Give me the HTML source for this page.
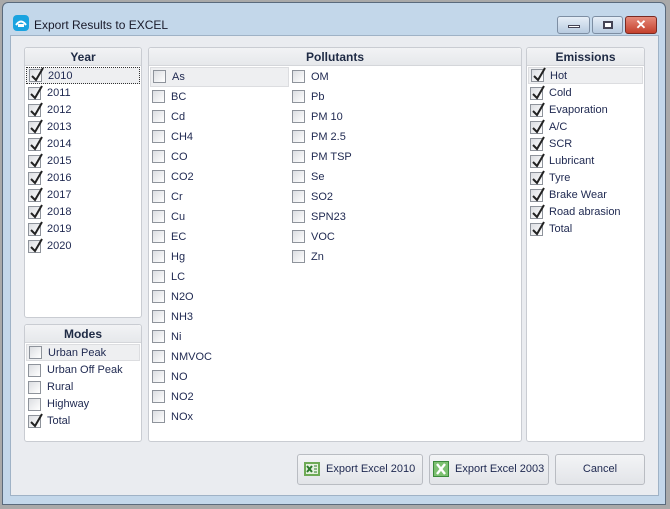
<!DOCTYPE html>
<html><head><style>
*{margin:0;padding:0;box-sizing:border-box}
body{width:670px;height:509px;background:#a9a9a9;font-family:"Liberation Sans",sans-serif;font-size:11px;color:#1e2850;position:relative;overflow:hidden}
.win{position:absolute;left:2px;top:2px;width:664px;height:503px;background:#c3d7ea;border:1px solid #5a6a7c;border-radius:6px 6px 0 0}
.title{position:absolute;left:31px;top:15px;font-size:12px;color:#1a1a2a}
.client{position:absolute;left:10px;top:35px;width:649px;height:461px;background:#eaecf0;border:1px solid #9fb2c6}
.p{position:absolute;background:#fff;border:1px solid #c9ccd2;border-radius:3px}
.h{height:18px;background:linear-gradient(#f2f3f5,#e6e8eb);border-bottom:1px solid #d4d6da;text-align:center;font-weight:bold;font-size:12px;line-height:18px;color:#1e2a44;border-radius:3px 3px 0 0}
.r{position:absolute;height:17px;line-height:17px;white-space:nowrap}
.r.sel{background:#eeeff1;border:1px solid #dcdde0;line-height:17px}
.r.sel .t{top:0}
.cb{position:absolute;left:3px;top:2px;width:13px;height:13px;border:1px solid #8e939b;background:linear-gradient(135deg,#dcdee2,#fff)}
.r.sel .cb{top:1px;left:2px}
.cb svg{position:absolute;left:0;top:-4px}
.t{position:absolute;left:22px}
.r.sel .t{left:21px}
.pr{height:20px;line-height:20px}
.r.pr.sel{line-height:18px}
.pr .cb{top:3px}
.btn{position:absolute;top:454px;height:31px;border:1px solid #b9bcc2;border-radius:3px;background:linear-gradient(#f3f4f6,#e2e4e8);font-size:11px;line-height:29px;color:#1e2850;white-space:nowrap}
.wb{position:absolute;top:13px;height:18px;border:1px solid #7d8ea3;border-radius:3px;background:linear-gradient(#e6eef7,#b8cbe0)}
</style></head><body>
<div class="win">
<svg style="position:absolute;left:10px;top:12px" width="16" height="16"><rect width="16" height="16" rx="4" fill="#1aa3e0"/><path d="M3 10 Q8 3 13 10" stroke="#fff" stroke-width="2" fill="none"/><rect x="5" y="9" width="6" height="3" fill="#fff"/></svg>
<div class="title">Export Results to EXCEL</div>
<div class="wb" style="left:554px;width:33px"><div style="position:absolute;left:10px;top:8px;width:12px;height:3px;background:#fff;border:1px solid #445"></div></div>
<div class="wb" style="left:589px;width:31px"><div style="position:absolute;left:10px;top:4px;width:10px;height:8px;border:2px solid #445;background:#fff"></div></div>
<div class="wb" style="left:622px;width:32px;background:linear-gradient(#e58a7a,#c4402c);border-color:#7a2a22;color:#fff;font-weight:bold;text-align:center;line-height:16px;font-size:13px">✕</div>
</div>
<div class="client"></div>

<div class="p" style="left:24px;top:47px;width:118px;height:271px"><div class="h">Year</div>
<div class="r sel" style="left:1px;top:19px;width:114px;border:1px dotted #333;background:#eeeff1"><span class="cb"><svg width="16" height="16"><path d="M2 10 L6 14 L13 2" stroke="#222" stroke-width="2" fill="none"/></svg></span><span class="t">2010</span></div>
<div class="r" style="left:0;top:37px"><span class="cb"><svg width="16" height="16"><path d="M2 10 L6 14 L13 2" stroke="#222" stroke-width="2" fill="none"/></svg></span><span class="t">2011</span></div>
<div class="r" style="left:0;top:54px"><span class="cb"><svg width="16" height="16"><path d="M2 10 L6 14 L13 2" stroke="#222" stroke-width="2" fill="none"/></svg></span><span class="t">2012</span></div>
<div class="r" style="left:0;top:71px"><span class="cb"><svg width="16" height="16"><path d="M2 10 L6 14 L13 2" stroke="#222" stroke-width="2" fill="none"/></svg></span><span class="t">2013</span></div>
<div class="r" style="left:0;top:88px"><span class="cb"><svg width="16" height="16"><path d="M2 10 L6 14 L13 2" stroke="#222" stroke-width="2" fill="none"/></svg></span><span class="t">2014</span></div>
<div class="r" style="left:0;top:105px"><span class="cb"><svg width="16" height="16"><path d="M2 10 L6 14 L13 2" stroke="#222" stroke-width="2" fill="none"/></svg></span><span class="t">2015</span></div>
<div class="r" style="left:0;top:122px"><span class="cb"><svg width="16" height="16"><path d="M2 10 L6 14 L13 2" stroke="#222" stroke-width="2" fill="none"/></svg></span><span class="t">2016</span></div>
<div class="r" style="left:0;top:139px"><span class="cb"><svg width="16" height="16"><path d="M2 10 L6 14 L13 2" stroke="#222" stroke-width="2" fill="none"/></svg></span><span class="t">2017</span></div>
<div class="r" style="left:0;top:156px"><span class="cb"><svg width="16" height="16"><path d="M2 10 L6 14 L13 2" stroke="#222" stroke-width="2" fill="none"/></svg></span><span class="t">2018</span></div>
<div class="r" style="left:0;top:173px"><span class="cb"><svg width="16" height="16"><path d="M2 10 L6 14 L13 2" stroke="#222" stroke-width="2" fill="none"/></svg></span><span class="t">2019</span></div>
<div class="r" style="left:0;top:190px"><span class="cb"><svg width="16" height="16"><path d="M2 10 L6 14 L13 2" stroke="#222" stroke-width="2" fill="none"/></svg></span><span class="t">2020</span></div>
</div>

<div class="p" style="left:24px;top:324px;width:118px;height:118px"><div class="h">Modes</div>
<div class="r sel" style="left:1px;top:19px;width:114px"><span class="cb"></span><span class="t">Urban Peak</span></div>
<div class="r" style="left:0;top:37px"><span class="cb"></span><span class="t">Urban Off Peak</span></div>
<div class="r" style="left:0;top:54px"><span class="cb"></span><span class="t">Rural</span></div>
<div class="r" style="left:0;top:71px"><span class="cb"></span><span class="t">Highway</span></div>
<div class="r" style="left:0;top:88px"><span class="cb"><svg width="16" height="16"><path d="M2 10 L6 14 L13 2" stroke="#222" stroke-width="2" fill="none"/></svg></span><span class="t">Total</span></div>
</div>

<div class="p" style="left:148px;top:47px;width:374px;height:395px"><div class="h">Pollutants</div>
<div class="r pr sel" style="left:1px;top:19px;width:139px"><span class="cb" style="top:2px"></span><span class="t">As</span></div>
<div class="r pr" style="left:0;top:39px"><span class="cb"></span><span class="t">BC</span></div>
<div class="r pr" style="left:0;top:59px"><span class="cb"></span><span class="t">Cd</span></div>
<div class="r pr" style="left:0;top:79px"><span class="cb"></span><span class="t">CH4</span></div>
<div class="r pr" style="left:0;top:99px"><span class="cb"></span><span class="t">CO</span></div>
<div class="r pr" style="left:0;top:119px"><span class="cb"></span><span class="t">CO2</span></div>
<div class="r pr" style="left:0;top:139px"><span class="cb"></span><span class="t">Cr</span></div>
<div class="r pr" style="left:0;top:159px"><span class="cb"></span><span class="t">Cu</span></div>
<div class="r pr" style="left:0;top:179px"><span class="cb"></span><span class="t">EC</span></div>
<div class="r pr" style="left:0;top:199px"><span class="cb"></span><span class="t">Hg</span></div>
<div class="r pr" style="left:0;top:219px"><span class="cb"></span><span class="t">LC</span></div>
<div class="r pr" style="left:0;top:239px"><span class="cb"></span><span class="t">N2O</span></div>
<div class="r pr" style="left:0;top:259px"><span class="cb"></span><span class="t">NH3</span></div>
<div class="r pr" style="left:0;top:279px"><span class="cb"></span><span class="t">Ni</span></div>
<div class="r pr" style="left:0;top:299px"><span class="cb"></span><span class="t">NMVOC</span></div>
<div class="r pr" style="left:0;top:319px"><span class="cb"></span><span class="t">NO</span></div>
<div class="r pr" style="left:0;top:339px"><span class="cb"></span><span class="t">NO2</span></div>
<div class="r pr" style="left:0;top:359px"><span class="cb"></span><span class="t">NOx</span></div>
<div class="r pr" style="left:140px;top:19px"><span class="cb"></span><span class="t">OM</span></div>
<div class="r pr" style="left:140px;top:39px"><span class="cb"></span><span class="t">Pb</span></div>
<div class="r pr" style="left:140px;top:59px"><span class="cb"></span><span class="t">PM 10</span></div>
<div class="r pr" style="left:140px;top:79px"><span class="cb"></span><span class="t">PM 2.5</span></div>
<div class="r pr" style="left:140px;top:99px"><span class="cb"></span><span class="t">PM TSP</span></div>
<div class="r pr" style="left:140px;top:119px"><span class="cb"></span><span class="t">Se</span></div>
<div class="r pr" style="left:140px;top:139px"><span class="cb"></span><span class="t">SO2</span></div>
<div class="r pr" style="left:140px;top:159px"><span class="cb"></span><span class="t">SPN23</span></div>
<div class="r pr" style="left:140px;top:179px"><span class="cb"></span><span class="t">VOC</span></div>
<div class="r pr" style="left:140px;top:199px"><span class="cb"></span><span class="t">Zn</span></div>
</div>

<div class="p" style="left:526px;top:47px;width:119px;height:395px"><div class="h">Emissions</div>
<div class="r sel" style="left:1px;top:19px;width:115px"><span class="cb"><svg width="16" height="16"><path d="M2 10 L6 14 L13 2" stroke="#222" stroke-width="2" fill="none"/></svg></span><span class="t">Hot</span></div>
<div class="r" style="left:0;top:37px"><span class="cb"><svg width="16" height="16"><path d="M2 10 L6 14 L13 2" stroke="#222" stroke-width="2" fill="none"/></svg></span><span class="t">Cold</span></div>
<div class="r" style="left:0;top:54px"><span class="cb"><svg width="16" height="16"><path d="M2 10 L6 14 L13 2" stroke="#222" stroke-width="2" fill="none"/></svg></span><span class="t">Evaporation</span></div>
<div class="r" style="left:0;top:71px"><span class="cb"><svg width="16" height="16"><path d="M2 10 L6 14 L13 2" stroke="#222" stroke-width="2" fill="none"/></svg></span><span class="t">A/C</span></div>
<div class="r" style="left:0;top:88px"><span class="cb"><svg width="16" height="16"><path d="M2 10 L6 14 L13 2" stroke="#222" stroke-width="2" fill="none"/></svg></span><span class="t">SCR</span></div>
<div class="r" style="left:0;top:105px"><span class="cb"><svg width="16" height="16"><path d="M2 10 L6 14 L13 2" stroke="#222" stroke-width="2" fill="none"/></svg></span><span class="t">Lubricant</span></div>
<div class="r" style="left:0;top:122px"><span class="cb"><svg width="16" height="16"><path d="M2 10 L6 14 L13 2" stroke="#222" stroke-width="2" fill="none"/></svg></span><span class="t">Tyre</span></div>
<div class="r" style="left:0;top:139px"><span class="cb"><svg width="16" height="16"><path d="M2 10 L6 14 L13 2" stroke="#222" stroke-width="2" fill="none"/></svg></span><span class="t">Brake Wear</span></div>
<div class="r" style="left:0;top:156px"><span class="cb"><svg width="16" height="16"><path d="M2 10 L6 14 L13 2" stroke="#222" stroke-width="2" fill="none"/></svg></span><span class="t">Road abrasion</span></div>
<div class="r" style="left:0;top:173px"><span class="cb"><svg width="16" height="16"><path d="M2 10 L6 14 L13 2" stroke="#222" stroke-width="2" fill="none"/></svg></span><span class="t">Total</span></div>
</div>

<div class="btn" style="left:297px;width:126px"><svg style="position:absolute;left:6px;top:7px" width="16" height="14"><rect x="0" y="0" width="16" height="14" fill="#6eaa55"/><rect x="2" y="2" width="12" height="10" fill="#e6f0de"/><path d="M3 4 L8 10 M8 4 L3 10" stroke="#2c7a2c" stroke-width="2"/><path d="M10 4h3M10 7h3M10 10h3" stroke="#2c7a2c"/></svg><span style="position:absolute;left:28px">Export Excel 2010</span></div>
<div class="btn" style="left:429px;width:120px"><svg style="position:absolute;left:3px;top:6px" width="16" height="16"><rect width="16" height="16" fill="#3b8a3b"/><rect x="1" y="1" width="14" height="14" fill="#7cc070"/><path d="M4 3 L12 13 M12 3 L4 13" stroke="#fff" stroke-width="2.4"/></svg><span style="position:absolute;left:25px">Export Excel 2003</span></div>
<div class="btn" style="left:555px;width:90px;text-align:center">Cancel</div>
</body></html>
